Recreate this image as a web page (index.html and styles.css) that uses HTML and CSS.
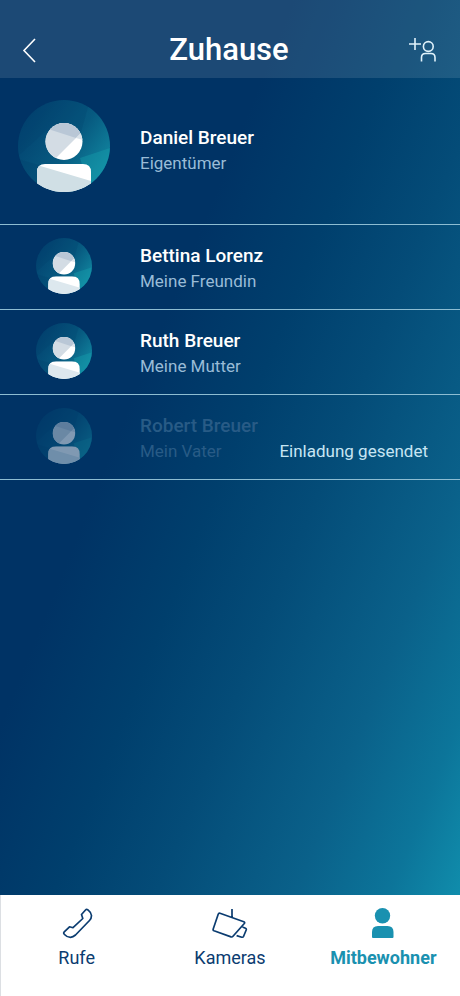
FILE: index.html
```html
<!DOCTYPE html>
<html lang="de">
<head>
<meta charset="utf-8">
<meta name="viewport" content="width=device-width, initial-scale=1">
<title>Zuhause</title>
<link rel="stylesheet" href="styles.css">
</head>
<body>
<svg class="defs" aria-hidden="true">
  <defs>
    <linearGradient id="disc" x1="0.1" y1="0.1" x2="1" y2="0.75">
      <stop offset="0" stop-color="#02416f"/>
      <stop offset="0.55" stop-color="#075a80"/>
      <stop offset="1" stop-color="#128aa3"/>
    </linearGradient>
    <clipPath id="round"><circle cx="46" cy="46" r="46"/></clipPath>
    <clipPath id="head"><circle cx="46" cy="41.5" r="18.5"/></clipPath>
    <clipPath id="torso"><path d="M19 92V72q0-8 8-8H65q8 0 8 8V92z"/></clipPath>
    <clipPath id="torso-soft"><path d="M20 92V76Q20 63 33 63H59Q72 63 72 76V92z"/></clipPath>
    <symbol id="disc-shape" viewBox="0 0 92 92">
      <g clip-path="url(#round)">
        <path fill="url(#disc)" d="M0 0H92V92H0z"/>
        <path fill="#003a69" opacity=".2" d="M0 0H72L62 36 28 31 0 56z"/>
        <path fill="#003a69" opacity=".25" d="M0 59 24 66V92H0z"/>
        <path fill="#17a3b0" opacity=".4" d="M62 58 92 48V92H72z"/>
        <g clip-path="url(#head)">
          <path fill="#fff" d="M27 22H65V61H27z"/>
          <path fill="#d3dce4" d="M27 22H65V31L36 60H27z"/>
          <path fill="#b9c7d6" d="M27 22H65V31L58 38 27 28z"/>
          <path fill="#dbe3ea" d="M58 38 65 31V40z"/>
        </g>
      </g>
    </symbol>
    <symbol id="avatar-large" viewBox="0 0 92 92">
      <use href="#disc-shape" width="92" height="92"/>
      <g clip-path="url(#round)"><g clip-path="url(#torso)">
        <path fill="#fff" d="M19 63H73V92H19z"/>
        <path fill="#d0dfe5" d="M19 65 73 81V92H19z"/>
      </g></g>
    </symbol>
    <symbol id="avatar" viewBox="0 0 92 92">
      <use href="#disc-shape" width="92" height="92"/>
      <g clip-path="url(#round)"><g clip-path="url(#torso-soft)">
        <path fill="#fff" d="M19 62H73V92H19z"/>
        <path fill="#dde8ee" d="M19 66 73 82V92H19z"/>
      </g></g>
    </symbol>
  </defs>
</svg>
<div class="app">
  <header class="topbar">
    <button class="icon-button" type="button" aria-label="Zurück">
      <svg class="back-icon" viewBox="0 0 14 26"><path d="M13 2 2 13.500 13 25"/></svg>
    </button>
    <h1 class="title">Zuhause</h1>
    <button class="icon-button add" type="button" aria-label="Mitbewohner hinzufügen">
      <svg class="add-icon" viewBox="0 0 28 26"><path d="M7 1V13M1 7H13"/><circle cx="20.300" cy="9.500" r="4.900"/><path d="M13.500 24.500V20.500q0-4 4-4H23q4 0 4 4V24.500"/></svg>
    </button>
  </header>
  <main class="content">
    <ul class="people">
      <li class="person owner">
        <svg class="avatar large" aria-hidden="true"><use href="#avatar-large"/></svg>
        <div class="details"><h2 class="name">Daniel Breuer</h2><p class="role">Eigentümer</p></div>
      </li>
      <li class="person">
        <svg class="avatar" aria-hidden="true"><use href="#avatar"/></svg>
        <div class="details"><h2 class="name">Bettina Lorenz</h2><p class="role">Meine Freundin</p></div>
      </li>
      <li class="person">
        <svg class="avatar" aria-hidden="true"><use href="#avatar"/></svg>
        <div class="details"><h2 class="name">Ruth Breuer</h2><p class="role">Meine Mutter</p></div>
      </li>
      <li class="person pending">
        <svg class="avatar" aria-hidden="true"><use href="#avatar"/></svg>
        <div class="details"><h2 class="name">Robert Breuer</h2><p class="role">Mein Vater</p></div>
        <p class="status">Einladung gesendet</p>
      </li>
    </ul>
  </main>
  <nav class="tabs">
    <a class="tab" href="#rufe">
      <svg class="tab-icon" viewBox="0 0 36 32"><path d="M26.500 2 22.500 6.500 23.800 10.500 14 19.700 10.500 18.800 5 24.200Q4.200 25.200 5.500 26.500 8 29.300 11.500 29.300 14 29.200 16.500 27L30.500 12.500Q32.500 10.500 32.500 7.500 32.200 4.500 29 1.900 27.500 1 26.500 2z"/></svg>
      <span>Rufe</span>
    </a>
    <a class="tab" href="#kameras">
      <svg class="tab-icon" viewBox="0 0 36 32"><path d="M20 1V10M8 5.300 31.800 13.700Q33.200 14.300 32.300 15.500L21 28.300Q20.200 29.300 19 28.900L2 22.800Q.8 22.300 1.200 21L6.200 6.200Q6.700 4.900 8 5.300zM30.500 19 33.500 20.300Q34.600 20.900 34.200 22L31.600 28.300Q31 29.500 29.800 29.200L24.600 27.600"/></svg>
      <span>Kameras</span>
    </a>
    <a class="tab active" href="#mitbewohner" aria-current="page">
      <svg class="tab-icon" viewBox="0 0 36 32"><circle cx="17.500" cy="7.700" r="7.700"/><path d="M7 30V24q0-6 6-6H22.500q6 0 6 6V29q0 1-1 1H8q-1 0-1-1z"/></svg>
      <span>Mitbewohner</span>
    </a>
  </nav>
</div>
</body>
</html>
```
FILE: styles.css
```css
* { box-sizing: border-box; }
body, h1, h2, p, ul { margin: 0; padding: 0; }
body { font-family: Roboto, "Liberation Sans", sans-serif; color: #fff; }
.defs { position: absolute; width: 0; height: 0; }
.app {
  min-height: 100vh;
  display: flex;
  flex-direction: column;
  background: linear-gradient(112deg, #003365 0%, #003365 34%, #003f6d 48%, #044c78 60%, #0a618a 76%, #0c759a 87%, #108cab 95%);
}
.topbar {
  height: 78px;
  padding: 22px 24px 0 22px;
  display: grid;
  grid-template-columns: 1fr auto 1fr;
  align-items: center;
  background: rgba(255, 255, 255, .11);
}
.icon-button {
  display: flex;
  padding: 0;
  border: 0;
  background: none;
  color: #fff;
  justify-self: start;
}
.icon-button.add { justify-self: end; color: #e0f2fb; }
.icon-button svg { fill: none; stroke: currentColor; stroke-width: 1.6; }
.back-icon { width: 14px; height: 26px; }
.add-icon { width: 28px; height: 26px; }
.title { font-size: 31px; line-height: 36px; font-weight: 500; }
.content { flex: 1; }
.people { list-style: none; }
.person {
  display: grid;
  grid-template-columns: 92px 1fr auto;
  column-gap: 30px;
  align-items: center;
  padding: 13px 32px 15px 18px;
  border-bottom: 1px solid #8dbdd2;
}
.person.owner { padding: 22px 32px 32px 18px; }
.avatar { width: 56px; height: 56px; justify-self: center; }
.avatar.large { width: 92px; height: 92px; }
.details { min-width: 0; padding-top: 4px; white-space: nowrap; }
.owner .details { padding-top: 8px; }
.name { font-size: 19px; line-height: 26px; font-weight: 500; }
.role, .status { font-size: 17px; line-height: 24px; }
.role { color: #99bcd7; }
.pending .avatar { opacity: .5; }
.pending .name, .pending .role { color: #285b86; }
.status { align-self: end; padding-bottom: 1px; color: #c7e5f3; }
.tabs {
  display: grid;
  grid-template-columns: repeat(3, 1fr);
  padding: 13px 0 25px;
  background: #fff;
  box-shadow: inset 1px 0 #dcdfe3;
}
.tab {
  display: flex;
  flex-direction: column;
  align-items: center;
  gap: 5px;
  color: #0b3c70;
  font-size: 18px;
  line-height: 26px;
  text-decoration: none;
}
.tab-icon { width: 36px; height: 32px; fill: none; stroke: currentColor; stroke-width: 1.7; stroke-linejoin: round; }
.tab.active { color: #1a91b0; font-weight: 700; }
.tab.active .tab-icon { fill: currentColor; stroke: none; }
```
